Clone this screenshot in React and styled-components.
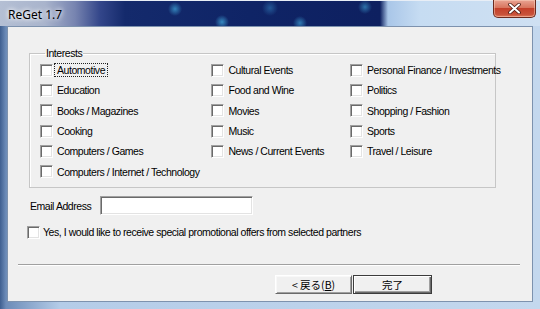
import React from 'react'
import styled, { createGlobalStyle } from 'styled-components'

const GlobalStyle = createGlobalStyle`
  html, body {
    margin: 0;
    padding: 0;
    background: #c0d6ee;
  }
`

const UI_FONT = `"Liberation Sans", "Noto Sans CJK JP", sans-serif`

const Window = styled.div`
  width: 540px;
  height: 309px;
  display: flex;
  flex-direction: column;
  overflow: hidden;
  background: linear-gradient(90deg, #3f5f90 0px, #6d8cb8 6px, #b4cce8 60px, #c4d8ee 100%);
  font-family: ${UI_FONT};
  font-size: 10.5px;
  letter-spacing: -0.45px;
  color: #000;
`

const TitleBar = styled.div`
  height: 26px;
  flex: none;
  display: flex;
  align-items: flex-start;
  box-sizing: border-box;
  border-top: 1px solid #e8eef6;
  letter-spacing: 0;
  background:
    radial-gradient(circle at 175px 8px, rgba(70, 180, 230, 0.65), transparent 7px),
    radial-gradient(circle at 222px 21px, rgba(70, 180, 230, 0.7), transparent 7px),
    radial-gradient(circle at 300px 22px, rgba(70, 180, 230, 0.6), transparent 7px),
    radial-gradient(circle at 365px 6px, rgba(70, 180, 230, 0.55), transparent 7px),
    radial-gradient(circle at 270px 7px, rgba(60, 150, 210, 0.45), transparent 8px),
    linear-gradient(90deg, #b4bfd4 0px, #a9b4cc 45px, #7784b0 75px, #33468a 100px, #142a6c 125px, #0f2466 250px, #0e2060 380px, #a9c6e8 388px, #c6dcf2 420px, #cfe0f2 540px);
`

const Title = styled.span`
  margin: 7px 0 0 8px;
  font-family: "Noto Sans", "Liberation Sans", sans-serif;
  font-size: 12px;
  line-height: 14px;
  color: #000;
  text-shadow: 0 0 6px #fff, 0 0 4px #fff;
`

const CloseButton = styled.div`
  margin-left: auto;
  margin-right: 4px;
  margin-top: -1px;
  width: 43px;
  height: 18px;
  display: flex;
  align-items: center;
  justify-content: center;
  box-sizing: border-box;
  border: 1px solid #6b2a1e;
  border-top: none;
  border-radius: 0 0 5px 5px;
  background: linear-gradient(#e9a493 0%, #d8755e 45%, #c4402a 50%, #c8523a 85%, #e07a5c 100%);
  box-shadow: inset 0 0 0 1px rgba(255, 220, 200, 0.45);
`

const Client = styled.div`
  flex: 1;
  margin: 0 7px 7px 7px;
  display: flex;
  flex-direction: column;
  background: #f0f0f0;
  border: 1px solid #7d92ae;
`

const GroupBox = styled.fieldset`
  box-sizing: border-box;
  width: 467px;
  height: 141px;
  margin: 20px 0 0 21px;
  padding: 0 0 0 10px;
  border: 1px solid #c6c6c6;
  box-shadow: 1px 1px 0 #fff inset;
  display: flex;
  min-width: 0;
`

const Legend = styled.legend`
  margin-left: 5px;
  padding: 0 1px;
  line-height: 13px;
`

const Column = styled.div`
  width: ${p => p.width}px;
  display: flex;
  flex-direction: column;
`

const Item = styled.label`
  height: 20.3px;
  display: flex;
  align-items: center;
  gap: ${p => (p.gap ?? 1)}px;
  white-space: nowrap;
`

const Box = styled.span`
  width: 13px;
  height: 13px;
  box-sizing: border-box;
  flex: none;
  background: #fff;
  border: 1px solid;
  border-color: #a0a0a0 #fff #fff #a0a0a0;
  box-shadow: inset 1px 1px 0 #6a6a6a, inset -1px -1px 0 #e3e3e3;
`

const Caption = styled.span`
  padding: 0 2px;
  line-height: 12px;
  border: 1px dotted ${p => (p.focused ? '#222' : 'transparent')};
`

const EmailRow = styled.div`
  display: flex;
  align-items: center;
  white-space: nowrap;
  margin: 8px 0 0 22px;
`

const EmailLabel = styled.span`
  width: 70px;
`

const TextInput = styled.div`
  width: 153px;
  height: 19px;
  box-sizing: border-box;
  background: #fff;
  border: 1px solid;
  border-color: #a0a0a0 #fff #fff #a0a0a0;
  box-shadow: inset 1px 1px 0 #6a6a6a, inset -1px -1px 0 #e3e3e3;
`

const PromoRow = styled.div`
  margin: 7px 0 0 19px;
`

const Separator = styled.div`
  margin: 22px 12px 0 10px;
  height: 0;
  border-top: 1px solid #a0a0a0;
  border-bottom: 1px solid #fff;
`

const ButtonRow = styled.div`
  display: flex;
  justify-content: flex-end;
  gap: 1px;
  margin: 9px 100px 0 0;
`

const Button = styled.div`
  width: ${p => p.width}px;
  height: 19px;
  box-sizing: border-box;
  display: flex;
  align-items: center;
  justify-content: center;
  font-family: "Noto Sans CJK JP", "Liberation Sans", sans-serif;
  font-size: 10.5px;
  letter-spacing: 0;
  background: #f0f0f0;
  border: 1px solid;
  border-color: ${p => (p.primary ? '#3c3c3c' : '#fff #6a6a6a #6a6a6a #fff')};
  box-shadow: ${p =>
    p.primary
      ? 'inset 1px 1px 0 #fff, inset -1px -1px 0 #6a6a6a, inset -2px -2px 0 #a0a0a0'
      : 'inset 1px 1px 0 #f8f8f8, inset -1px -1px 0 #a0a0a0'};
`

const Mnemonic = styled.u`
  text-underline-offset: 1px;
`

const columns = [
  { width: 172, items: ['Automotive', 'Education', 'Books / Magazines', 'Cooking', 'Computers / Games', 'Computers / Internet / Technology'] },
  { width: 139, items: ['Cultural Events', 'Food and Wine', 'Movies', 'Music', 'News / Current Events'] },
  { width: 145, items: ['Personal Finance / Investments', 'Politics', 'Shopping / Fashion', 'Sports', 'Travel / Leisure'] },
]

function CloseGlyph() {
  return (
    <svg width="13" height="11" viewBox="0 0 13 11">
      <path d="M2 1.5 L11 9.5 M11 1.5 L2 9.5" stroke="#4a1a12" strokeWidth="3.6" strokeLinecap="round" />
      <path d="M2 1.5 L11 9.5 M11 1.5 L2 9.5" stroke="#fff" strokeWidth="2" strokeLinecap="round" />
    </svg>
  )
}

export default function App() {
  return (
    <>
      <GlobalStyle />
      <Window>
        <TitleBar>
          <Title>ReGet 1.7</Title>
          <CloseButton><CloseGlyph /></CloseButton>
        </TitleBar>
        <Client>
          <GroupBox>
            <Legend>Interests</Legend>
            {columns.map((col, ci) => (
              <Column key={ci} width={col.width}>
                {col.items.map((name, i) => (
                  <Item key={name}>
                    <Box />
                    <Caption focused={ci === 0 && i === 0}>{name}</Caption>
                  </Item>
                ))}
              </Column>
            ))}
          </GroupBox>
          <EmailRow>
            <EmailLabel>Email Address</EmailLabel>
            <TextInput />
          </EmailRow>
          <PromoRow>
            <Item gap={3}>
              <Box />
              <span>Yes, I would like to receive special promotional offers from selected partners</span>
            </Item>
          </PromoRow>
          <Separator />
          <ButtonRow>
            <Button width={77}>&lt;&nbsp;戻る(<Mnemonic>B</Mnemonic>)</Button>
            <Button width={79} primary>完了</Button>
          </ButtonRow>
        </Client>
      </Window>
    </>
  )
}
